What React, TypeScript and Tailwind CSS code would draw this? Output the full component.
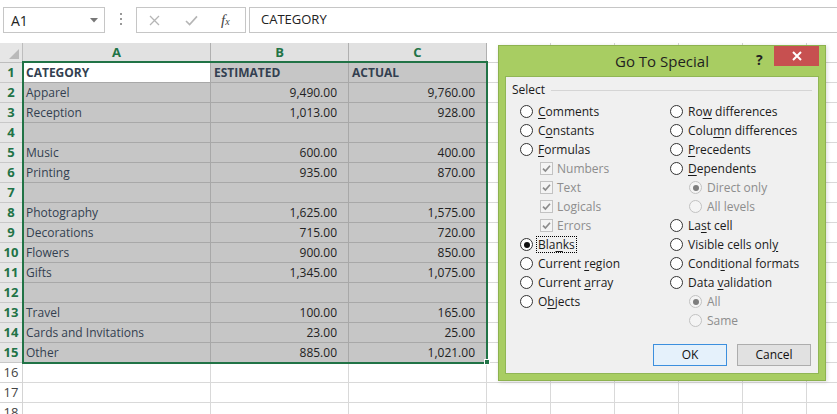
import clsx from "clsx"

const cols = [
  { key: "A", w: "w-[188px]", sel: true },
  { key: "B", w: "w-[138px]", sel: true },
  { key: "C", w: "w-[138px]", sel: true },
  { key: "D", w: "w-[64px]", sel: false },
  { key: "E", w: "w-[64px]", sel: false },
  { key: "F", w: "w-[64px]", sel: false },
  { key: "G", w: "w-[64px]", sel: false },
  { key: "H", w: "w-[64px]", sel: false },
  { key: "I", w: "w-[64px]", sel: false },
]

const rows: [string, string, string][] = [
  ["CATEGORY", "ESTIMATED", "ACTUAL"],
  ["Apparel", "9,490.00", "9,760.00"],
  ["Reception", "1,013.00", "928.00"],
  ["", "", ""],
  ["Music", "600.00", "400.00"],
  ["Printing", "935.00", "870.00"],
  ["", "", ""],
  ["Photography", "1,625.00", "1,575.00"],
  ["Decorations", "715.00", "720.00"],
  ["Flowers", "900.00", "850.00"],
  ["Gifts", "1,345.00", "1,075.00"],
  ["", "", ""],
  ["Travel", "100.00", "165.00"],
  ["Cards and Invitations", "23.00", "25.00"],
  ["Other", "885.00", "1,021.00"],
]

type Opt = {
  label: string
  key?: number
  kind: "radio" | "check" | "sub"
  checked?: boolean
  disabled?: boolean
  focus?: boolean
}

const leftOpts: Opt[] = [
  { label: "Comments", key: 0, kind: "radio" },
  { label: "Constants", key: 1, kind: "radio" },
  { label: "Formulas", key: 0, kind: "radio" },
  { label: "Numbers", kind: "check", checked: true, disabled: true },
  { label: "Text", kind: "check", checked: true, disabled: true },
  { label: "Logicals", kind: "check", checked: true, disabled: true },
  { label: "Errors", kind: "check", checked: true, disabled: true },
  { label: "Blanks", key: 3, kind: "radio", checked: true, focus: true },
  { label: "Current region", key: 8, kind: "radio" },
  { label: "Current array", key: 8, kind: "radio" },
  { label: "Objects", key: 1, kind: "radio" },
]

const rightOpts: Opt[] = [
  { label: "Row differences", key: 2, kind: "radio" },
  { label: "Column differences", key: 4, kind: "radio" },
  { label: "Precedents", key: 0, kind: "radio" },
  { label: "Dependents", key: 0, kind: "radio" },
  { label: "Direct only", kind: "sub", checked: true, disabled: true },
  { label: "All levels", kind: "sub", disabled: true },
  { label: "Last cell", key: 2, kind: "radio" },
  { label: "Visible cells only", key: 17, kind: "radio" },
  { label: "Conditional formats", key: 5, kind: "radio" },
  { label: "Data validation", key: 5, kind: "radio" },
  { label: "All", kind: "sub", checked: true, disabled: true },
  { label: "Same", kind: "sub", disabled: true },
]

function Radio({ checked, disabled }: { checked?: boolean; disabled?: boolean }) {
  return (
    <span
      className={clsx(
        "flex h-[13px] w-[13px] shrink-0 items-center justify-center rounded-full border",
        disabled ? "border-[#c2c2c2] bg-[#f4f4f4]" : "border-[#333333] bg-white"
      )}
    >
      {checked && (
        <span className={clsx("h-[6px] w-[6px] rounded-full", disabled ? "bg-[#7d7d7d]" : "bg-[#111111]")} />
      )}
    </span>
  )
}

function Check() {
  return (
    <span className="flex h-[13px] w-[13px] shrink-0 items-center justify-center border border-[#c2c2c2] bg-[#f4f4f4]">
      <svg width="9" height="9" viewBox="0 0 9 9">
        <path d="M1 4.6 L3.4 7 L8 1.8" fill="none" stroke="#8c8c8c" strokeWidth="1.7" />
      </svg>
    </span>
  )
}

function Label({ opt }: { opt: Opt }) {
  const { label, key } = opt
  const text =
    key === undefined ? (
      label
    ) : (
      <>
        {label.slice(0, key)}
        <span className="underline underline-offset-2">{label[key]}</span>
        {label.slice(key + 1)}
      </>
    )
  return (
    <span
      className={clsx(
        "leading-[15px]",
        opt.disabled ? "text-[#8d8d8d]" : "text-[#1b1b1b]",
        opt.focus ? "-ml-px border border-dotted border-black px-px" : "border border-transparent"
      )}
    >
      {text}
    </span>
  )
}

function OptRow({ opt }: { opt: Opt }) {
  return (
    <div
      className={clsx(
        "flex h-[19px] items-center",
        opt.kind === "check" && "pl-[20px] gap-[3px]",
        opt.kind === "sub" && "pl-[19px] gap-[4px]",
        opt.kind === "radio" && "gap-[4px]"
      )}
    >
      {opt.kind === "check" ? <Check /> : <Radio checked={opt.checked} disabled={opt.disabled} />}
      <Label opt={opt} />
    </div>
  )
}

function FormulaBar() {
  return (
    <div className="flex h-[43px] items-start pt-[7px] font-['Open_Sans',sans-serif]">
      <div className="ml-[3px] flex h-[26px] w-[102px] items-center justify-between border border-[#c6c6c6] pl-[7px] pr-[6px] text-[14px] text-[#222]">
        <span>A1</span>
        <svg width="8" height="5" viewBox="0 0 8 5">
          <path d="M0 0 H8 L4 4.5 Z" fill="#777" />
        </svg>
      </div>
      <div className="flex w-[31px] flex-col items-center gap-[3px] pt-[6px]">
        <span className="h-[2px] w-[2px] bg-[#999]" />
        <span className="h-[2px] w-[2px] bg-[#999]" />
        <span className="h-[2px] w-[2px] bg-[#999]" />
      </div>
      <div className="flex h-[26px] w-[110px] items-center border border-[#c6c6c6]">
        <svg className="ml-[12px]" width="11" height="11" viewBox="0 0 11 11">
          <path d="M1 1 L10 10 M10 1 L1 10" stroke="#b5b5b5" strokeWidth="1.3" />
        </svg>
        <svg className="ml-[25px]" width="13" height="11" viewBox="0 0 13 11">
          <path d="M1 6 L4.6 9.6 L12 1.4" fill="none" stroke="#b5b5b5" strokeWidth="1.6" />
        </svg>
        <span className="ml-[23px] font-['Liberation_Serif',serif] text-[15px] italic leading-none text-[#444]">
          f<span className="text-[10px]">x</span>
        </span>
      </div>
      <div className="ml-[3px] flex h-[26px] flex-1 items-center border border-r-0 border-[#c6c6c6] pl-[11px] text-[13px] text-[#222]">
        CATEGORY
      </div>
    </div>
  )
}

function Sheet() {
  const numRows = 18
  return (
    <div className="flex flex-col font-['Open_Sans',sans-serif] text-[12px]">
      <div className="flex h-[20px]">
        <div className="relative w-[23px] shrink-0 border-b border-r border-[#bdbdbd] bg-[#e6e6e6]">
          <svg className="absolute bottom-[3px] right-[3px]" width="10" height="10" viewBox="0 0 10 10">
            <path d="M10 0 V10 H0 Z" fill="#b9b9b9" />
          </svg>
        </div>
        {cols.map((c) => (
          <div
            key={c.key}
            className={clsx(
              "flex shrink-0 items-center justify-center border-b border-r text-[13px]",
              c.w,
              c.sel
                ? "border-[#b0b0b0] bg-[#e1e1e1] font-bold text-[#217346]"
                : "border-[#d4d4d4] bg-white text-[#444]"
            )}
          >
            {c.key}
          </div>
        ))}
      </div>
      {Array.from({ length: numRows }).map((_, i) => {
        const data = rows[i]
        const sel = i < 15
        return (
          <div key={i} className="flex h-[20px]">
            <div
              className={clsx(
                "flex w-[23px] shrink-0 items-center justify-center border-b border-r pt-px text-[13px]",
                sel
                  ? "border-[#c8c8c8] bg-[#e6e6e6] font-bold text-[#217346]"
                  : "border-[#d4d4d4] bg-white text-[#444]"
              )}
            >
              {i + 1}
            </div>
            {cols.map((c, ci) => {
              const inSel = sel && c.sel
              const active = i === 0 && ci === 0
              const val = data && ci < 3 ? data[ci] : ""
              const isNum = ci > 0 && i > 0
              return (
                <div
                  key={c.key}
                  className={clsx(
                    "flex shrink-0 items-center overflow-hidden whitespace-nowrap border-b border-r pt-px",
                    c.w,
                    inSel ? "border-[#a8a8a8]" : "border-[#d9d9d9]",
                    active ? "bg-white" : inSel ? "bg-[#c6c6c6]" : "bg-white",
                    isNum ? "justify-end pr-[11px] text-[#222]" : "pl-[3px] text-[#333f50]",
                    i === 0 && "font-bold"
                  )}
                >
                  {val}
                </div>
              )
            })}
          </div>
        )
      })}
    </div>
  )
}

function Dialog() {
  return (
    <div className="absolute left-[498px] top-[45px] flex h-[336px] w-[328px] flex-col border border-[#8db24f] bg-[#a8cd62] font-['Open_Sans',sans-serif] text-[12px] shadow-[1px_1px_4px_rgba(0,0,0,0.15)]">
      <div className="relative flex h-[30px] shrink-0 items-center justify-center">
        <span className="text-[15px] text-[#1f1f1f]">Go To Special</span>
        <span className="absolute left-[257px] top-[3px] text-[14px] font-bold text-[#222]">?</span>
        <div className="absolute right-[6px] top-0 flex h-[20px] w-[45px] items-center justify-center bg-[#c75050]">
          <svg width="10" height="10" viewBox="0 0 10 10">
            <path d="M1 1 L9 9 M9 1 L1 9" stroke="white" strokeWidth="2" />
          </svg>
        </div>
      </div>
      <div className="mx-[6px] mb-[6px] flex flex-1 flex-col border border-[#90b655] bg-[#f0f0f0] pt-[4px]">
        <div className="flex h-[18px] items-center pl-[6px]">
          <span className="text-[#1b1b1b]">Select</span>
          <span className="ml-[6px] mr-[6px] h-px flex-1 bg-[#d5d5d5]" />
        </div>
        <div className="mt-[3px] flex pl-[14px]">
          <div className="flex w-[150px] flex-col">
            {leftOpts.map((o) => (
              <OptRow key={o.label} opt={o} />
            ))}
          </div>
          <div className="flex flex-col">
            {rightOpts.map((o) => (
              <OptRow key={o.label + o.kind} opt={o} />
            ))}
          </div>
        </div>
        <div className="mt-[14px] flex justify-end gap-[10px] pr-[7px]">
          <div className="flex h-[22px] w-[74px] items-center justify-center border border-[#3c8fde] bg-[#e5f1fb] text-[#111]">
            OK
          </div>
          <div className="flex h-[22px] w-[74px] items-center justify-center border border-[#adadad] bg-[#e1e1e1] text-[#111]">
            Cancel
          </div>
        </div>
      </div>
    </div>
  )
}

export default function App() {
  return (
    <div className="relative h-[414px] w-[837px] overflow-hidden bg-white">
      <FormulaBar />
      <Sheet />
      {/* selection box over A1:C15 */}
      <div className="pointer-events-none absolute left-[22px] top-[61px] h-[303px] w-[466px] border-2 border-[#217346]" />
      <div className="absolute left-[484px] top-[359px] h-[6px] w-[6px] border border-white bg-[#217346]" />
      <Dialog />
    </div>
  )
}
